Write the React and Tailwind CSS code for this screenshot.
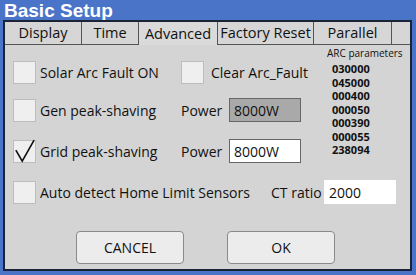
import React from "react";

const Box = ({ checked }) => (
    <div className="w-[23px] h-[23px] bg-[#efefef] border border-[#bdbdbd] relative shrink-0">
        {checked && (
            <svg viewBox="0 0 23 23" className="absolute inset-0 w-full h-full overflow-visible">
                <path d="M2 10 L9 22 L22 -1" fill="none" stroke="#111" strokeWidth="1.8" />
            </svg>
        )}
    </div>
);

const Tab = ({ label, w, active }) => (
    <div
        className={
            "h-full flex items-center justify-center border-r border-[#555] text-[14.5px] " +
            (active ? "bg-[#dadada]" : "bg-[#d6d6d6] border-b")
        }
        style={{ width: w }}
    >
        {label}
    </div>
);

const App = () => {
    return (
        <div
            className="w-[416px] h-[275px] bg-[#4a74c8] flex flex-col text-[#111]"
            style={{ fontFamily: '"Open Sans", "Noto Sans", sans-serif' }}
        >
            {/* Title */}
            <div
                className="h-[20px] px-[4px] pt-[1px] text-white font-bold text-[19px] leading-[19px]"
                style={{ fontFamily: '"Liberation Sans", Arial, sans-serif' }}
            >
                Basic Setup
            </div>

            {/* Frame */}
            <div className="ml-[3px] mr-[4px] mb-[4px] flex-1 border-2 border-[#1b2436] bg-[#d4d4d4] flex flex-col">
                {/* Tabs */}
                <div className="h-[23px] flex">
                    <Tab label="Display" w={77} />
                    <Tab label="Time" w={57} />
                    <Tab label="Advanced" w={79} active />
                    <Tab label="Factory Reset" w={96} />
                    <Tab label="Parallel" w={78} />
                    <div className="flex-1 bg-[#d6d6d6] border-b border-[#555]" />
                </div>

                <div className="flex-1 flex">
                    {/* Left area */}
                    <div className="flex-1 flex flex-col pl-[8px] pt-[15px] text-[14px]">
                        <div className="flex items-center h-[24px]">
                            <Box />
                            <span className="ml-[4px] w-[141px]">Solar Arc Fault ON</span>
                            <Box />
                            <span className="ml-[7px]">Clear Arc_Fault</span>
                        </div>
                        <div className="flex items-center h-[24px] mt-[14px]">
                            <Box />
                            <span className="ml-[4px] w-[141px]">Gen peak-shaving</span>
                            <span className="w-[48px]">Power</span>
                            <div className="w-[72px] h-[24px] bg-[#a9a9a9] border border-[#666] flex items-center px-[4px]">
                                8000W
                            </div>
                        </div>
                        <div className="flex items-center h-[24px] mt-[17px]">
                            <Box checked />
                            <span className="ml-[4px] w-[141px]">Grid peak-shaving</span>
                            <span className="w-[48px]">Power</span>
                            <div className="w-[72px] h-[24px] bg-white border border-[#666] flex items-center px-[4px]">
                                8000W
                            </div>
                        </div>
                    </div>

                    {/* ARC parameters */}
                    <div className="w-[84px] pt-[1px] flex flex-col">
                        <div className="leading-[14px] text-[10px] pl-[1px]">ARC parameters</div>
                        <div className="pl-[6px] text-[11px] font-bold leading-[13.5px] mt-[2px]">
                            <div>030000</div>
                            <div>045000</div>
                            <div>000400</div>
                            <div>000050</div>
                            <div>000390</div>
                            <div>000055</div>
                            <div>238094</div>
                        </div>
                    </div>
                </div>

                {/* Auto detect row */}
                <div className="flex items-center h-[24px] pl-[8px] text-[14px]">
                    <Box />
                    <span className="ml-[4px] w-[231px]">Auto detect Home Limit Sensors</span>
                    <span className="w-[53px]">CT ratio</span>
                    <div className="w-[72px] h-[24px] bg-white flex items-center px-[5px]">2000</div>
                </div>

                {/* Buttons */}
                <div className="flex gap-[43px] pl-[71px] mt-[27px] mb-[5px]">
                    <button className="w-[108px] h-[33px] rounded-[4px] bg-[#ececec] border border-[#8a8a8a] text-[14px]">
                        CANCEL
                    </button>
                    <button className="w-[108px] h-[33px] rounded-[4px] bg-[#ececec] border border-[#8a8a8a] text-[14px]">
                        OK
                    </button>
                </div>
            </div>
        </div>
    );
};

export default App;
